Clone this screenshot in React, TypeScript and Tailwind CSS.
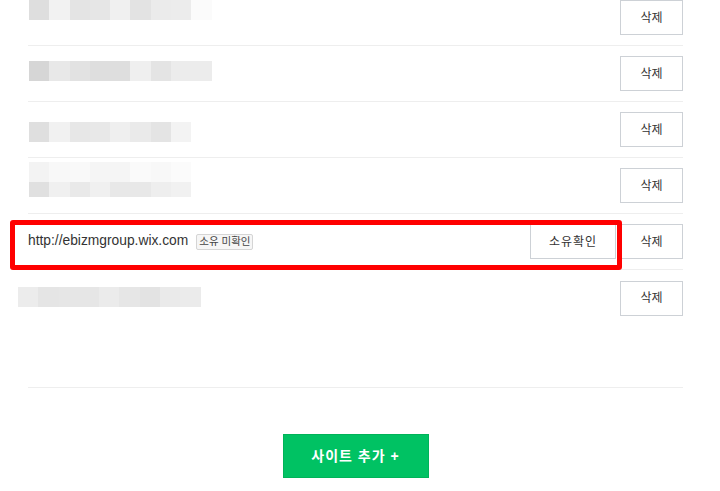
import type { CSSProperties } from "react";

type Mosaic = {
  offset: string; // margin classes for placement inside the row
  lines: string[][];
};

const SITES: { mosaic?: Mosaic; url?: string }[] = [
  {
    mosaic: {
      offset: "mt-[10px] ml-px",
      lines: [["#dedede", "#f2f2f2", "#e4e4e4", "#e6e6e6", "#f0f0f0", "#e3e3e3", "#ebebeb", "#ececec", "#fbfbfb"]],
    },
  },
  {
    mosaic: {
      offset: "mt-[15px] ml-px",
      lines: [["#d6d6d6", "#e8e8e8", "#e2e2e2", "#dedede", "#dedede", "#efefef", "#e4e4e4", "#ececec", "#ececec"]],
    },
  },
  {
    mosaic: {
      offset: "mt-[20px] ml-px",
      lines: [["#dfdfdf", "#f1f1f1", "#e7e7e7", "#e8e8e8", "#efefef", "#eaeaea", "#e4e4e4", "#f3f3f3"]],
    },
  },
  {
    mosaic: {
      offset: "mt-[4px] ml-px",
      lines: [
        ["#f3f3f3", "#f8f8f8", "#f9f9f9", "#f5f5f5", "#f5f5f5", "#fafafa", "#f8f8f8", "#fbfbfb"],
        ["#e0e0e0", "#f0f0f0", "#e9e9e9", "#f0f0f0", "#e8e8e8", "#e8e8e8", "#eeeeee", "#f1f1f1"],
      ],
    },
  },
  { url: "http://ebizmgroup.wix.com" },
  {
    mosaic: {
      offset: "mt-[17px] -ml-[10px]",
      lines: [["#ececec", "#e5e5e5", "#e6e6e6", "#e6e6e6", "#ebebeb", "#e6e6e6", "#e3e3e3", "#eaeaea", "#ebebeb"]],
    },
  },
];

const font: CSSProperties = {
  fontFamily: '"Liberation Sans", "Noto Sans CJK KR", sans-serif',
};

function MosaicBlock({ mosaic }: { mosaic: Mosaic }) {
  return (
    <div className={`flex flex-col self-start ${mosaic.offset}`}>
      {mosaic.lines.map((line, i) => (
        <div key={i} className={`flex ${i === 0 ? "h-[20px]" : "h-[15px]"}`}>
          {line.map((c, j) => (
            <div key={j} className="h-full w-[20.3px]" style={{ backgroundColor: c }} />
          ))}
        </div>
      ))}
    </div>
  );
}

function DeleteButton() {
  return (
    <button className="flex h-[35px] w-[63px] shrink-0 items-center justify-center border border-[#cdd1d6] bg-white text-[12px] text-[#333]">
      삭제
    </button>
  );
}

export default function App() {
  return (
    <div className="h-[491px] w-[720px] overflow-hidden bg-white" style={font}>
      <div className="ml-[28px] w-[655px]">
        <ul className="-mt-[10px] h-[336px]">
          {SITES.map((site, i) => (
            <li
              key={i}
              className={`relative flex h-[56px] items-center justify-between ${
                i < SITES.length - 1 ? "border-b border-[#eeeeee]" : ""
              }`}
            >
              {site.url ? (
                <>
                  <div className="flex items-center">
                    <span className="text-[13.8px] text-[#333]">{site.url}</span>
                    <span className="ml-[8px] flex h-[16px] items-center rounded-[2px] border border-[#d5d5d5] bg-[#f6f6f6] px-[2px] text-[10.5px] leading-none text-[#444]">
                      소유 미확인
                    </span>
                  </div>
                  <div className="flex items-center gap-[4px]">
                    <button className="flex h-[35px] w-[86px] items-center justify-center border border-[#cdd1d6] bg-white text-[12px] tracking-[1px] text-[#333]">
                      소유확인
                    </button>
                    <DeleteButton />
                  </div>
                  <div className="pointer-events-none absolute -left-[18px] top-[6px] h-[50px] w-[612px] rounded-[3px] border-[5px] border-[#ff0000]" />
                </>
              ) : (
                <>
                  {site.mosaic && <MosaicBlock mosaic={site.mosaic} />}
                  <DeleteButton />
                </>
              )}
            </li>
          ))}
        </ul>
        <div className="mt-[61px] border-b border-[#eeeeee]" />
        <div className="mt-[46px] flex justify-center">
          <button className="h-[44px] w-[146px] border border-[#00b359] bg-[#00c263] text-[14px] font-bold tracking-[1px] text-white">
            사이트 추가 +
          </button>
        </div>
      </div>
    </div>
  );
}
